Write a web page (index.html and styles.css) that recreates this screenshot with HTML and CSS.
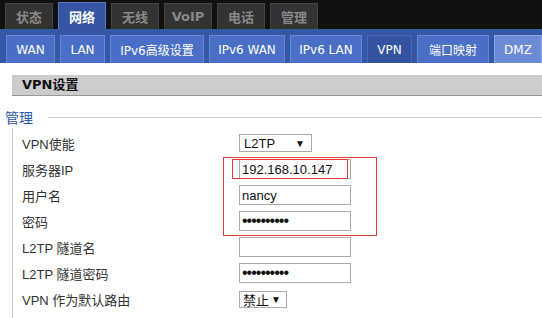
FILE: index.html
```html
<!DOCTYPE html>
<html lang="zh-CN">
<head>
  <meta charset="UTF-8">
  <title>VPN设置</title>
  <link rel="stylesheet" href="styles.css">
</head>
<body>

  <div class="topbar">
    <div class="toptab">状态</div>
    <div class="toptab active">网络</div>
    <div class="toptab">无线</div>
    <div class="toptab">VoIP</div>
    <div class="toptab">电话</div>
    <div class="toptab">管理</div>
  </div>

  <div class="subbar">
    <div class="subtab tab-wan">WAN</div>
    <div class="subtab tab-lan">LAN</div>
    <div class="subtab tab-v6adv">IPv6高级设置</div>
    <div class="subtab tab-v6wan">IPv6 WAN</div>
    <div class="subtab tab-v6lan">IPv6 LAN</div>
    <div class="subtab tab-vpn active">VPN</div>
    <div class="subtab tab-port">端口映射</div>
    <div class="subtab tab-dmz hover">DMZ</div>
  </div>

  <div class="content">
    <div class="panel-title">VPN设置</div>

    <div class="section-head">
      <span class="legend">管理</span>
      <span class="legend-line"></span>
    </div>

    <div class="section-body">
      <div class="row">
        <label>VPN使能</label>
        <div class="select sel-type"><span>L2TP</span><span class="arrow">▼</span></div>
      </div>
      <div class="row">
        <label>服务器IP</label>
        <input type="text" value="192.168.10.147">
      </div>
      <div class="row">
        <label>用户名</label>
        <input type="text" value="nancy">
      </div>
      <div class="row">
        <label>密码</label>
        <input type="password" value="1234567890">
      </div>
      <div class="row">
        <label>L2TP 隧道名</label>
        <input type="text" value="">
      </div>
      <div class="row">
        <label>L2TP 隧道密码</label>
        <input type="password" value="1234567890">
      </div>
      <div class="row">
        <label>VPN 作为默认路由</label>
        <div class="select sel-route"><span>禁止</span><span class="arrow">▼</span></div>
      </div>
    </div>
  </div>

  <!-- red marks drawn over the screenshot -->
  <div class="mark mark-outer"></div>
  <div class="mark mark-inner"></div>

</body>
</html>
```

FILE: styles.css
```css
body {
  margin: 0;
  font-family: "Liberation Sans", "Noto Sans CJK SC", sans-serif;
  font-size: 13px;
  color: #333;
  background: #fff;
  position: relative;
  height: 318px;
  overflow: hidden;
}
.topbar {
  background: #111;
  height: 29px;
  display: flex;
  align-items: flex-end;
  gap: 5px;
  padding-left: 5px;
}
.toptab {
  width: 46px;
  height: 25px;
  background: #333;
  border: 1px solid #444;
  border-bottom: none;
  color: #888;
  font-weight: bold;
  font-size: 13px;
  display: flex;
  align-items: center;
  justify-content: center;
  font-family: "DejaVu Sans", "Noto Sans CJK SC", sans-serif;
}
.toptab.active {
  height: 26px;
  background: #3656a4;
  border-color: #5878c8;
  color: #fff;
}
.subbar {
  background: #3457a6;
  height: 34px;
  box-sizing: border-box;
  padding: 6px 0 0 6px;
  display: flex;
  gap: 5px;
}
.subtab {
  height: 28px;
  box-sizing: border-box;
  background: #4a6fc6;
  border: 1px solid #6686d6;
  border-bottom: none;
  color: #fff;
  font-family: "DejaVu Sans", "Noto Sans CJK SC", sans-serif;
  font-size: 12px;
  display: flex;
  align-items: center;
  justify-content: center;
}
.subtab.active {
  background: #3454a2;
  border-color: #4a68b6;
}
.subtab.hover {
  background: #6b8bd6;
  border-color: #8aa6e2;
}
.tab-wan { width: 49px; }
.tab-lan { width: 45px; }
.tab-v6adv { width: 94px; }
.tab-v6wan { width: 76px; }
.tab-v6lan { width: 72px; }
.tab-vpn { width: 45px; }
.tab-port { width: 72px; }
.tab-dmz { width: 48px; }

.content {
  padding-top: 12px;
}
.panel-title {
  margin-left: 12px;
  height: 20px;
  background: #ccc;
  border-bottom: 1px solid #999;
  padding-left: 10px;
  font-weight: bold;
  color: #111;
  font-size: 13px;
  line-height: 20px;
  font-family: "DejaVu Sans", "Noto Sans CJK SC", sans-serif;
}
.section-head {
  margin-top: 10px;
  height: 22px;
  display: flex;
  align-items: center;
  padding-left: 5px;
}
.legend {
  color: #2c5aa8;
  font-size: 14px;
}
.legend-line {
  flex: 1;
  height: 1px;
  background: #ccc;
  margin-left: 15px;
}
.section-body {
  margin-left: 12px;
  border-left: 1px solid #ccc;
  padding: 2px 0 12px 9px;
}
.row {
  height: 26px;
  display: flex;
  align-items: center;
}
.row label {
  width: 217px;
  color: #333;
}
.row input {
  width: 112px;
  height: 20px;
  box-sizing: border-box;
  border: 1px solid #aaa;
  padding: 0 2px;
  font-family: "Liberation Sans", sans-serif;
  font-size: 13px;
  color: #111;
  outline: none;
}
.row input[type="password"] {
  font-size: 16px;
  letter-spacing: -1px;
}
.select {
  height: 18px;
  box-sizing: border-box;
  border: 1px solid #aaa;
  display: flex;
  align-items: center;
  justify-content: space-between;
  padding: 0 6px 0 4px;
  color: #111;
  white-space: nowrap;
}
.select .arrow {
  font-size: 10px;
  color: #111;
}
.sel-type { width: 73px; }
.sel-route {
  width: 48px;
  height: 17px;
  padding: 0 5px 0 3px;
}

.mark {
  position: absolute;
  border: 1px solid #e53a3a;
  box-sizing: border-box;
}
.mark-outer {
  left: 223px;
  top: 157px;
  width: 154px;
  height: 79px;
}
.mark-inner {
  left: 232px;
  top: 159px;
  width: 116px;
  height: 20px;
}
```
